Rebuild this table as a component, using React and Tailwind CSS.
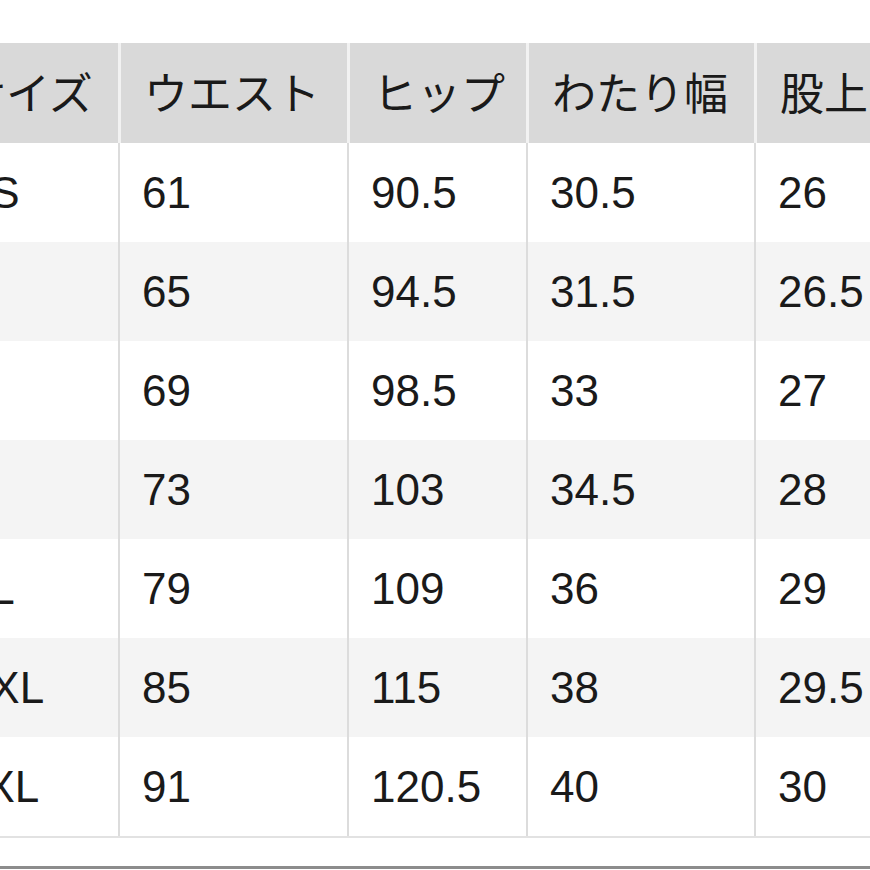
import React from 'react'

const headers = ['サイズ', 'ウエスト', 'ヒップ', 'わたり幅', '股上']
const rows = [
  ['XS', '61', '90.5', '30.5', '26'],
  ['S', '65', '94.5', '31.5', '26.5'],
  ['M', '69', '98.5', '33', '27'],
  ['L', '73', '103', '34.5', '28'],
  ['XL', '79', '109', '36', '29'],
  ['XXL', '85', '115', '38', '29.5'],
  ['3XL', '91', '120.5', '40', '30'],
]
const widths = ['w-[179px]', 'w-[229px]', 'w-[179px]', 'w-[228px]', 'w-[229px]']

export default function App() {
  return (
    <div
      className="w-[870px] h-[870px] bg-white overflow-hidden flex flex-col"
      style={{ fontFamily: '"Liberation Sans", "Noto Sans CJK JP", sans-serif' }}
    >
      <div className="h-[43px] shrink-0" />
      <div className="-ml-[61px] flex flex-col text-[44px] text-[#1a1a1a] leading-none">
        {/* header */}
        <div className="flex h-[100px] shrink-0">
          {headers.map((h, i) => (
            <div
              key={h}
              className={`${widths[i]} shrink-0 h-full bg-[#d9d9d9] flex items-center pt-[4px] pl-[23px] whitespace-nowrap ${i > 0 ? 'border-l-[3px] border-[#f2f2f2]' : ''}`}
            >
              {h}
            </div>
          ))}
        </div>
        {rows.map((r, ri) => (
          <div key={ri} className={`flex h-[99px] shrink-0 ${ri % 2 === 1 ? 'bg-[#f4f4f4]' : 'bg-white'}`}>
            {r.map((c, i) => (
              <div
                key={i}
                className={`${widths[i]} shrink-0 h-full flex items-center pl-[22px] whitespace-nowrap ${i > 0 ? 'border-l-2 border-[#dcdcdc]' : ''}`}
              >
                {c}
              </div>
            ))}
          </div>
        ))}
        <div className="h-[2px] bg-[#e2e2e2] shrink-0" />
      </div>
      <div className="flex-1" />
      <div className="h-[3px] bg-[#8c8c8c] shrink-0 mb-[1px]" />
    </div>
  )
}
